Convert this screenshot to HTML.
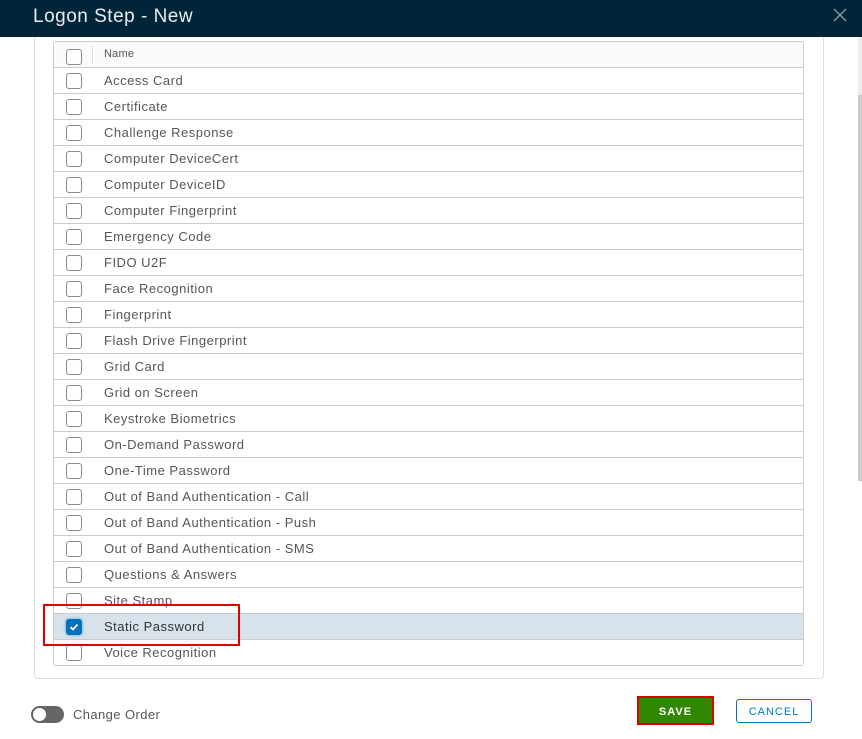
<!DOCTYPE html>
<html><head><style>
body{margin:0;width:862px;height:739px;background:#fff;font-family:"Liberation Sans",sans-serif;position:relative;overflow:hidden}
.hdr{position:absolute;left:0;top:0;width:862px;height:37px;background:#002538}
.hdr span{position:absolute;left:33px;top:6px;color:#e8edf0;font-size:19px;letter-spacing:0.5px}
.x{position:absolute;left:833px;top:8px}
.panel{position:absolute;left:34px;top:37px;width:788px;height:641px;border:1px solid #ddd;border-top:none;border-radius:0 0 4px 4px}
.tbl{position:absolute;left:53px;top:41px;width:749px;height:623px;border:1px solid #ccc;border-radius:3px;overflow:hidden}
.row{position:absolute;left:0;width:749px;height:25px;border-bottom:1px solid #ccc}
.row span{position:absolute;left:50px;top:5px;font-size:13px;color:#565656;letter-spacing:0.5px}
.cb{position:absolute;left:12px;top:5px;width:14px;height:14px;border:1px solid #8c8c8c;border-radius:3px;background:#fff}
.sb{position:absolute;left:858px;top:95px;width:4px;height:386px;background:#ccc}
.sbt{position:absolute;left:858px;top:37px;width:4px;height:58px;background:#eee}
</style></head><body>
<div class="hdr"><span>Logon Step - New</span>
<svg class="x" width="14" height="14" viewBox="0 0 14 14"><path d="M1 1L13 13M13 1L1 13" stroke="#8a9aa5" stroke-width="1.3"/></svg></div>
<div class="sbt"></div><div class="sb"></div>
<div class="panel"></div>
<div class="tbl">
<div class="row" style="top:0;background:#fafafa"><div class="cb" style="top:7px"></div><div style="position:absolute;left:38px;top:4px;width:1px;height:18px;background:#ddd"></div><span style="font-size:11px;top:6px;color:#555;letter-spacing:0.2px">Name</span></div>
<div class="row" style="top:26px"><div class="cb"></div><span>Access Card</span></div>
<div class="row" style="top:52px"><div class="cb"></div><span>Certificate</span></div>
<div class="row" style="top:78px"><div class="cb"></div><span>Challenge Response</span></div>
<div class="row" style="top:104px"><div class="cb"></div><span>Computer DeviceCert</span></div>
<div class="row" style="top:130px"><div class="cb"></div><span>Computer DeviceID</span></div>
<div class="row" style="top:156px"><div class="cb"></div><span>Computer Fingerprint</span></div>
<div class="row" style="top:182px"><div class="cb"></div><span>Emergency Code</span></div>
<div class="row" style="top:208px"><div class="cb"></div><span>FIDO U2F</span></div>
<div class="row" style="top:234px"><div class="cb"></div><span>Face Recognition</span></div>
<div class="row" style="top:260px"><div class="cb"></div><span>Fingerprint</span></div>
<div class="row" style="top:286px"><div class="cb"></div><span>Flash Drive Fingerprint</span></div>
<div class="row" style="top:312px"><div class="cb"></div><span>Grid Card</span></div>
<div class="row" style="top:338px"><div class="cb"></div><span>Grid on Screen</span></div>
<div class="row" style="top:364px"><div class="cb"></div><span>Keystroke Biometrics</span></div>
<div class="row" style="top:390px"><div class="cb"></div><span>On-Demand Password</span></div>
<div class="row" style="top:416px"><div class="cb"></div><span>One-Time Password</span></div>
<div class="row" style="top:442px"><div class="cb"></div><span>Out of Band Authentication - Call</span></div>
<div class="row" style="top:468px"><div class="cb"></div><span>Out of Band Authentication - Push</span></div>
<div class="row" style="top:494px"><div class="cb"></div><span>Out of Band Authentication - SMS</span></div>
<div class="row" style="top:520px"><div class="cb"></div><span>Questions &amp; Answers</span></div>
<div class="row" style="top:546px"><div class="cb"></div><span>Site Stamp</span></div>
<div class="row" style="top:572px;background:#d8e2ea"><div class="cb" style="background:#0072b9;border-color:#0072b9;box-shadow:0 0 3px #4aa3e0"><svg width="14" height="14" viewBox="0 0 14 14" style="position:absolute;left:0;top:0"><path d="M3.5 7.2L6 9.5L10.5 4.5" stroke="#fff" stroke-width="1.8" fill="none"/></svg></div><span style="color:#333">Static Password</span></div>
<div class="row" style="top:598px"><div class="cb"></div><span>Voice Recognition</span></div>
</div>
<div style="position:absolute;left:43px;top:604px;width:193px;height:38px;border:2px solid #e00000"></div>
<div style="position:absolute;left:31px;top:706px;width:33px;height:17px;border-radius:9px;background:#666"><div style="position:absolute;left:2px;top:2px;width:13px;height:13px;border-radius:50%;background:#fff"></div></div>
<span style="position:absolute;left:73px;top:707px;font-size:13px;color:#565656;letter-spacing:0.4px">Change Order</span>
<div style="position:absolute;left:637px;top:696px;width:73px;height:25px;border:2px solid #e00000;background:#318700;color:#fff;font-size:11px;font-weight:bold;text-align:center;line-height:28px;letter-spacing:1px">SAVE</div>
<div style="position:absolute;left:736px;top:699px;width:74px;height:22px;border:1px solid #0079b8;border-radius:3px;color:#0079b8;font-size:11px;text-align:center;line-height:24px;letter-spacing:1px">CANCEL</div>
</body></html>
